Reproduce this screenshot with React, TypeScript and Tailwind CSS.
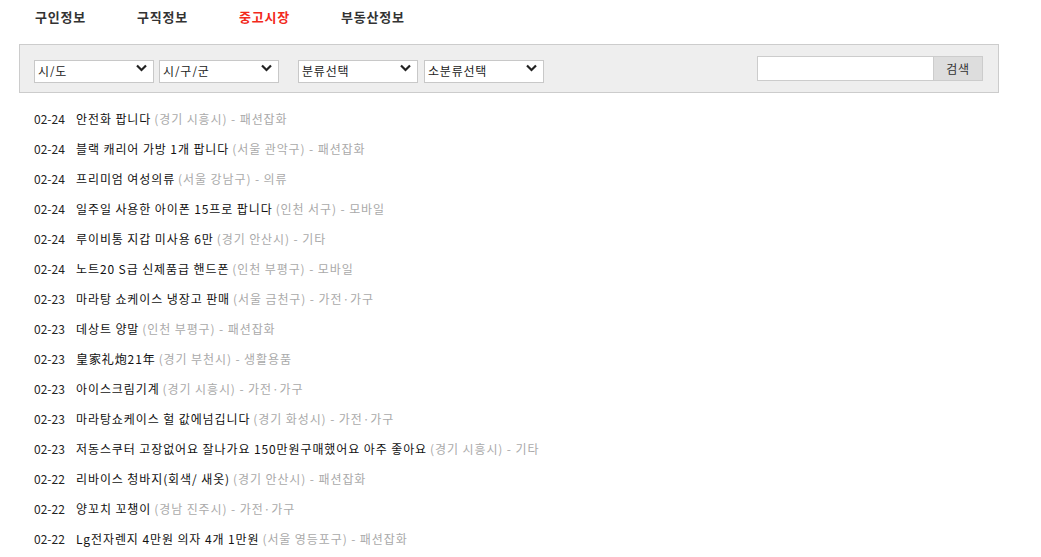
import React from "react";

const rows: [string, string, string, string][] = [
  ["02-24", "안전화 팝니다", "경기 시흥시", "패션잡화"],
  ["02-24", "블랙 캐리어 가방 1개 팝니다", "서울 관악구", "패션잡화"],
  ["02-24", "프리미엄 여성의류", "서울 강남구", "의류"],
  ["02-24", "일주일 사용한 아이폰 15프로 팝니다", "인천 서구", "모바일"],
  ["02-24", "루이비통 지갑 미사용 6만", "경기 안산시", "기타"],
  ["02-24", "노트20 S급 신제품급 핸드폰", "인천 부평구", "모바일"],
  ["02-23", "마라탕 쇼케이스 냉장고 판매", "서울 금천구", "가전·가구"],
  ["02-23", "데상트 양말", "인천 부평구", "패션잡화"],
  ["02-23", "皇家礼炮21年", "경기 부천시", "생활용품"],
  ["02-23", "아이스크림기계", "경기 시흥시", "가전·가구"],
  ["02-23", "마라탕쇼케이스 헐 값에넘깁니다", "경기 화성시", "가전·가구"],
  ["02-23", "저동스쿠터 고장없어요 잘나가요 150만원구매했어요 아주 좋아요", "경기 시흥시", "기타"],
  ["02-22", "리바이스 청바지(회색/ 새옷)", "경기 안산시", "패션잡화"],
  ["02-22", "양꼬치 꼬챙이", "경남 진주시", "가전·가구"],
  ["02-22", "Lg전자렌지 4만원 의자 4개 1만원", "서울 영등포구", "패션잡화"],
];

const font = { fontFamily: '"Noto Sans CJK KR", "Noto Sans", sans-serif' };

function Chevron() {
  return (
    <svg width="11" height="8" viewBox="0 0 11 8" className="pointer-events-none absolute right-[7px] top-[7px]">
      <path d="M1 1.5 L5.5 6 L10 1.5" fill="none" stroke="#222" strokeWidth="2.2" />
    </svg>
  );
}

function Sel({ label, ml }: { label: string; ml: string }) {
  return (
    <div className={`relative h-[23px] w-[120px] ${ml}`}>
      <select
        className="h-full w-full appearance-none border border-[#c8c8c8] bg-white pl-[3px] text-[12px] leading-none tracking-[0.8px] text-[#222] outline-none"
        style={font}
        defaultValue={label}
      >
        <option>{label}</option>
      </select>
      <Chevron />
    </div>
  );
}

export default function App() {
  const nav = ["구인정보", "구직정보", "중고시장", "부동산정보"];
  return (
    <div className="h-[557px] w-[1041px] overflow-hidden bg-white" style={font}>
      <div className="flex h-[44px] items-start pl-[35px] pt-[7px]">
        {nav.map((n) => (
          <div
            key={n}
            className={`w-[102px] text-[13px] font-bold leading-[20px] tracking-[0.8px] ${n === "중고시장" ? "text-[#f2291b]" : "text-[#333]"}`}
          >
            {n}
          </div>
        ))}
      </div>
      <div className="ml-[19px] flex h-[49px] w-[980px] items-center border border-[#cccccc] bg-[#eeeeee] pl-[14px] pr-[15px]">
        <Sel label="시/도" ml="" />
        <Sel label="시/구/군" ml="ml-[5px]" />
        <Sel label="분류선택" ml="ml-[19px]" />
        <Sel label="소분류선택" ml="ml-[6px]" />
        <div className="ml-auto flex h-[25px]">
          <input className="h-full w-[177px] border border-[#cccccc] bg-white outline-none" />
          <button className="h-full w-[49px] border border-l-0 border-[#cccccc] bg-[#dddddd] text-[12px] tracking-[0.8px] text-[#333]" style={font}>
            검색
          </button>
        </div>
      </div>
      <div className="mt-[11px] pl-[34px]">
        {rows.map(([d, t, loc, cat], i) => (
          <div key={i} className="flex h-[30px] items-center text-[12px] whitespace-nowrap">
            <span className="w-[42px] text-[#222]">{d}</span>
            <span className="tracking-[0.9px] text-[#111]">{t}</span>
            <span className="ml-[3px] tracking-[0.9px] text-[#aaaaaa]">
              ({loc}) - {cat}
            </span>
          </div>
        ))}
      </div>
    </div>
  );
}
